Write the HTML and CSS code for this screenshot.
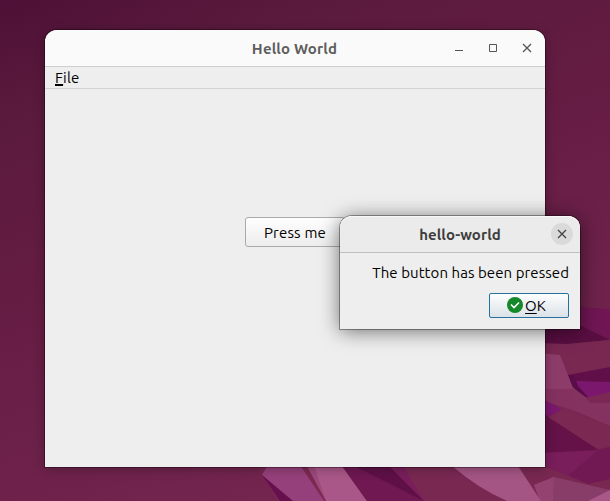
FILE: index.html
```html
<!DOCTYPE html>
<html lang="en">
<head>
<meta charset="utf-8">
<title>Hello World</title>
<link rel="stylesheet" href="styles.css">
</head>
<body>
<main class="desktop">
  <svg class="wallpaper" viewBox="0 0 610 501" aria-hidden="true">
    <path fill="#792852" d="M545 325H610V501H278L262 475L258 467H545Z"/>
    <path fill="#701654" d="M580 307L610 309V340L580 331Z"/>
    <path fill="#5a0e42" d="M540 327L580 325L610 340L568 344L540 343Z"/>
    <path fill="#792852" d="M540 344L568 344L610 340V367L569 375Z"/>
    <path fill="#610f49" d="M568 375L610 367V383L573 381Z"/>
    <path fill="#7b176d" d="M573 381L610 382V393L588 398Z"/>
    <path fill="#580c48" d="M568 375L574 376L578 386L588 397L584 398L572 386Z"/>
    <path fill="#8d3c6a" d="M540 353L560 355L573 388L588 399L610 425L576 411L545 401Z"/>
    <path fill="#84315f" d="M545 389H573L610 426L576 411L545 401Z"/>
    <path fill="#843360" d="M573 388L588 399L610 403V426L576 411Z"/>
    <path fill="#7c2854" d="M585 398L610 392V403H591Z"/>
    <path fill="#7b176d" d="M545 400L563 410L548 417L545 414Z"/>
    <path fill="#641248" d="M545 414L599 450L610 448L585 455L545 454Z"/>
    <path fill="#7b2852" d="M548 417L563 409L610 426V447L599 450Z"/>
    <path fill="#701953" d="M540 453L585 452L610 447V487L588 484L545 466Z"/>
    <path fill="#791d5b" d="M540 453L598 450L568 476L545 466Z"/>
    <path fill="#792852" d="M545 466L588 484L610 479V490L580 482Z"/>
    <path fill="#883c68" d="M534 485L554 477L610 490V501H540Z"/>
    <path fill="#94426f" d="M534 485L554 477L553 501H540Z"/>
    <path fill="#a95688" d="M588 501L610 490V501Z"/>
    <path fill="#96407b" d="M268 465H301L326 501H290L262 475Z"/>
    <path fill="#66114d" d="M262 475L293 501H280Z"/>
    <path fill="#a95788" d="M307 466H342L367 501H326Z"/>
    <path fill="#7e2852" d="M300 465H306L326 501H324Z"/>
    <path fill="#9c497c" d="M307 466H314L326 501Z"/>
    <path fill="#6f1852" d="M342 466H390L424 501H367Z"/>
    <path fill="#5f1047" d="M354 466H390L424 501Z"/>
    <path fill="#791e5b" d="M389 466H403L424 501Z"/>
    <path fill="#a45584" d="M452 466H518L541 501H507Q479 489 452 466Z"/>
  </svg>

  <section class="window main-window">
    <header class="titlebar">
      <span class="title main-title">Hello World</span>
      <svg class="controls" viewBox="0 0 80 12" aria-hidden="true">
        <path d="M1 8.5H9"/>
        <path d="M35.5 2.5H42.5V9.5H35.5Z"/>
        <path d="M69 2L77 10M77 2L69 10" stroke-width="1.3"/>
      </svg>
    </header>
    <nav class="menubar"><span class="menu-label"><u>F</u>ile</span></nav>
    <div class="content"><button class="press"><span>Press me</span></button></div>
  </section>

  <section class="window dialog">
    <header class="dialog-bar">
      <span class="title dialog-title">hello-world</span>
      <span class="close"><svg viewBox="0 0 22 22" aria-hidden="true"><path d="M7 7L15 15M15 7L7 15"/></svg></span>
    </header>
    <div class="dialog-body">
      <p class="message">The button has been pressed</p>
      <button class="ok">
        <svg viewBox="0 0 16 16" aria-hidden="true"><circle cx="8" cy="8" r="8"/><path d="M4 7.5L7 10.5L12 5.5"/></svg>
        <span><u>O</u>K</span>
      </button>
    </div>
  </section>
</main>
</body>
</html>
```
FILE: styles.css
```css
* { box-sizing: border-box; }
body { margin: 0; font: 15px/20px Ubuntu, "Noto Sans", sans-serif; color: #000; }
.desktop { position: relative; width: 610px; height: 501px; overflow: hidden; background: linear-gradient(160deg, #4e1036 0%, #5b1b3e 18%, #651c43 42%, #6f234c 72%, #7a2853 96%); }
.wallpaper { display: block; width: 610px; height: 501px; }
.window { position: absolute; display: flex; flex-direction: column; background: #eee; }
.main-window { left: 45px; top: 30px; width: 500px; height: 437px; border-radius: 12px 12px 0 0; box-shadow: 0 0 0 1px rgba(0,0,0,.35), 0 2px 12px rgba(0,0,0,.28); }
.titlebar { position: relative; height: 37px; flex: none; display: flex; align-items: center; justify-content: center; background: #fafafa; border-bottom: 1px solid #cfcfcf; border-radius: 12px 12px 0 0; }
.title { font-weight: 700; white-space: nowrap; padding-top: 1px; }
.main-title { color: #5e5e5e; letter-spacing: .15px; padding-right: 1px; }
.controls { position: absolute; right: 11px; top: 12px; width: 80px; height: 12px; fill: none; stroke: #555; }
.menubar { height: 22px; flex: none; padding-left: 10px; border-bottom: 1px solid #d3d3d3; line-height: 21px; letter-spacing: .2px; }
u { text-decoration-thickness: 1px; text-underline-offset: 2px; text-decoration-skip-ink: none; }
.menubar u { text-decoration-thickness: 2px; text-underline-offset: 1px; }
.content { flex: 1; display: flex; align-items: center; justify-content: center; padding-bottom: 92px; }
button { font: inherit; padding: 0; color: #000; white-space: nowrap; }
.press { width: 100px; height: 30px; padding-top: 2px; border: 1px solid #aaa; border-radius: 3px; background: linear-gradient(#fefefe, #ededed); letter-spacing: .2px; }
.dialog { left: 340px; top: 216px; width: 240px; height: 113px; border-radius: 12px 12px 0 0; box-shadow: 0 0 0 1px rgba(0,0,0,.35), 0 2px 20px rgba(0,0,0,.55); }
.dialog-bar { position: relative; height: 37px; flex: none; display: flex; align-items: center; justify-content: center; background: #ebebeb; border-bottom: 1px solid #bfbfbf; border-radius: 12px 12px 0 0; box-shadow: inset 0 1px #f9f9f9; }
.dialog-title { color: #3d3d3d; letter-spacing: .05px; }
.close { position: absolute; right: 7px; top: 7px; width: 22px; height: 22px; border-radius: 50%; background: #dadada; }
.close svg { display: block; fill: none; stroke: #444; stroke-width: 1.3; }
.dialog-body { display: flex; flex-direction: column; align-items: flex-end; padding: 10px 11px 0 0; gap: 10px; }
.message { margin: 0; white-space: nowrap; letter-spacing: .07px; }
.ok { width: 80px; height: 25px; border: 1px solid #26719e; border-radius: 2px; background: linear-gradient(#fdfefe, #dbe2e8); display: flex; align-items: center; justify-content: center; gap: 2px; padding-right: 5px; }
.ok svg { width: 16px; height: 16px; margin-top: -1px; fill: #15882a; }
.ok path { fill: none; stroke: #fff; stroke-width: 1.6; }
```
